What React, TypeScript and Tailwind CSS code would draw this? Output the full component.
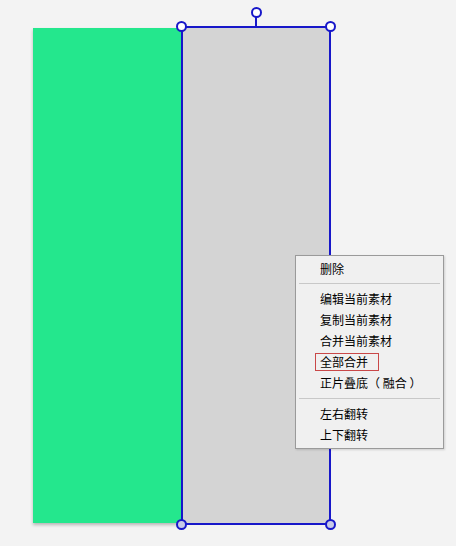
import React from "react";

const items1 = ["编辑当前素材", "复制当前素材", "合并当前素材"];

function Handle({ x, y, fill }: { x: number; y: number; fill: string }) {
  return (
    <div
      className="absolute w-[11px] h-[11px] rounded-full border-2 border-[#1717c9]"
      style={{ left: x - 5.5, top: y - 5.5, background: fill }}
    />
  );
}

function Row({ children }: { children: React.ReactNode }) {
  return <div className="h-[21px] flex items-center pl-[24px]">{children}</div>;
}

export default function App() {
  return (
    <div
      className="relative w-[456px] h-[546px] bg-[#f3f3f3] overflow-hidden text-[12px] text-black"
      style={{ fontFamily: '"Noto Sans CJK SC", "Microsoft YaHei", sans-serif' }}
    >
      {/* green element */}
      <div className="absolute left-[33px] top-[28px] w-[149px] h-[495px] bg-[#24e78d] shadow-[0_2px_3px_rgba(0,0,0,0.25)]" />
      {/* selected gray element */}
      <div className="absolute left-[181px] top-[26px] w-[150px] h-[499px] bg-[#d4d4d4] border-2 border-[#1717c9]" />
      {/* rotation handle line */}
      <div className="absolute left-[255px] top-[16px] w-[2px] h-[11px] bg-[#1717c9]" />
      <Handle x={256} y={12} fill="#ffffff" />
      <Handle x={181} y={26} fill="#ffffff" />
      <Handle x={330} y={26} fill="#ffffff" />
      <Handle x={181} y={524} fill="#c7cae8" />
      <Handle x={330} y={524} fill="#c7cae8" />

      {/* context menu */}
      <div className="absolute left-[295px] top-[255px] w-[149px] h-[194px] bg-[#f0f0f0] border border-[#9a9a9a] pt-[2px] shadow-[1px_1px_2px_rgba(0,0,0,0.15)]">
        <Row>删除</Row>
        <div className="mx-[3px] mt-[4px] mb-[4px] h-px bg-[#c8c8c8]" />
        {items1.map((t) => (
          <Row key={t}>{t}</Row>
        ))}
        <div className="h-[21px] flex items-center pl-[19px]">
          <span className="border border-[#c94848] px-[4px] w-[64px] h-[18px] flex items-center">全部合并</span>
        </div>
        <Row>正片叠底（ 融合 ）</Row>
        <div className="mx-[3px] mt-[5px] mb-[4px] h-px bg-[#c8c8c8]" />
        <Row>左右翻转</Row>
        <Row>上下翻转</Row>
      </div>
    </div>
  );
}
